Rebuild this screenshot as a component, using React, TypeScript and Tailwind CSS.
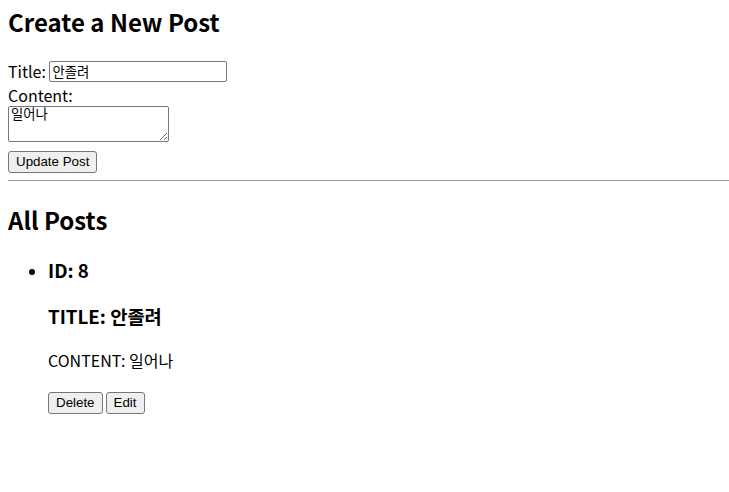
import React from 'react';

const btn =
  "px-[7px] py-[2px] border border-[#767676] rounded-[3px] bg-[#efefef] text-[13.33px] leading-[16px] text-black [font-family:'Liberation_Sans',Arial,sans-serif]";

export default function App() {
  return (
    <div className="mx-2 mt-[6px] text-black [font-family:'Noto_Sans_CJK_KR','Noto_Sans',sans-serif] text-base bg-white">
      <h2 className="text-2xl font-bold mt-0 mb-[22px]">Create a New Post</h2>
      <form>
        <div className="flex items-center h-[22px]">
          <label>Title:&nbsp;</label>
          <input
            defaultValue="안졸려"
            className="w-[178px] h-[21px] px-[2px] border border-[#767676] rounded-[2px] text-[13.33px] [font-family:'Liberation_Sans','Noto_Sans_CJK_KR',sans-serif]"
          />
        </div>
        <label className="block leading-[22px] mt-[2px]">Content:</label>
        <textarea
          defaultValue="일어나"
          rows={2}
          cols={20}
          className="block w-[161px] h-[36px] px-[2px] py-[1px] border border-[#767676] rounded-[2px] text-[13.33px] leading-[16px] [font-family:'Liberation_Mono','Noto_Sans_CJK_KR',monospace]"
        />
        <button type="button" className={`${btn} mt-[9px]`}>Update Post</button>
      </form>
      <hr className="w-[721px] mt-[7px] mb-2 border-t border-[#9a9a9a]" />
      <h2 className="text-2xl font-bold mt-[23px] mb-5">All Posts</h2>
      <ul className="list-disc pl-10 my-4">
        <li>
          <h3 className="text-[18.72px] font-bold my-[18px]">ID: 8</h3>
          <h3 className="text-[18.72px] font-bold my-[18px]">TITLE: 안졸려</h3>
          <p className="mt-4 mb-5">CONTENT: 일어나</p>
          <div className="flex gap-[3px]">
            <button type="button" className={btn}>Delete</button>
            <button type="button" className={btn}>Edit</button>
          </div>
        </li>
      </ul>
    </div>
  );
}
